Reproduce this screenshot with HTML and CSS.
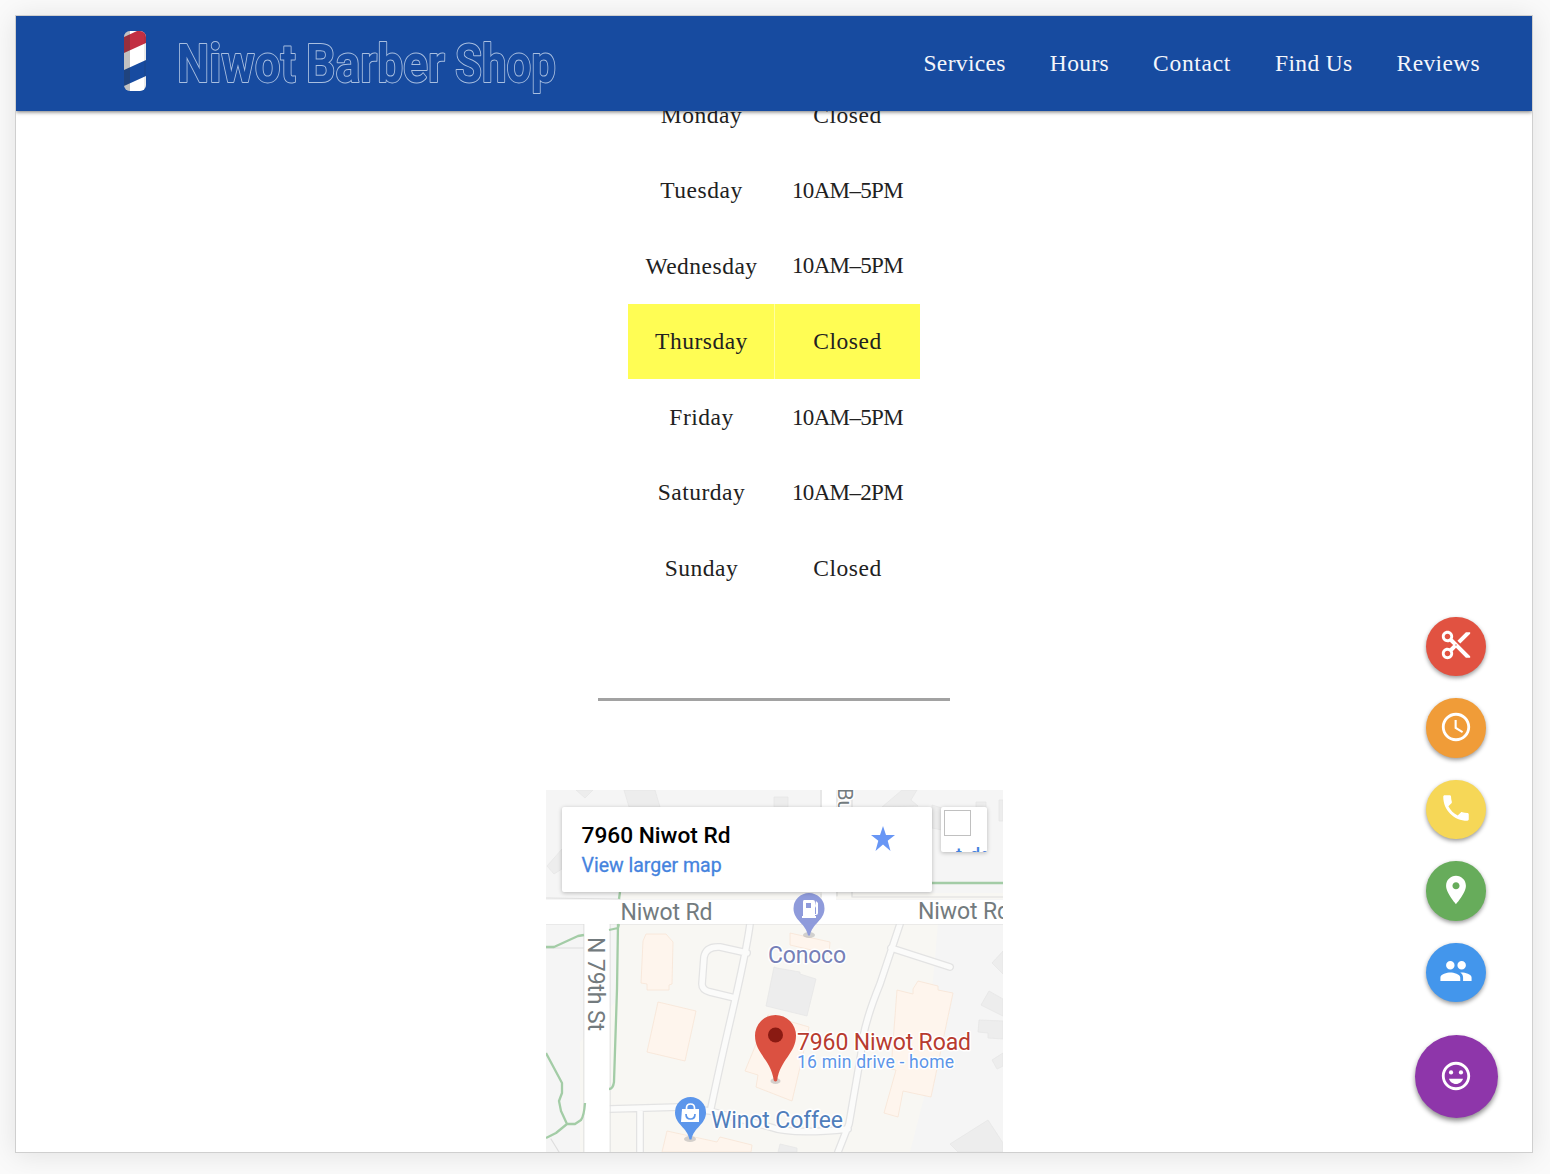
FILE: index.html
```html
<!DOCTYPE html>
<html lang="en">
<head>
<meta charset="utf-8">
<title>Niwot Barber Shop</title>
<link rel="stylesheet" href="styles.css">
</head>
<body>
<div class="window">
  <header class="navbar">
    <div class="brand">
      <svg class="pole" viewBox="0 0 22 60">
        <defs><clipPath id="pole"><rect width="22" height="60" rx="6"/></clipPath></defs>
        <g clip-path="url(#pole)">
          <path fill="#fff" d="M0 0h22v60H0z"/>
          <path fill="#c22f43" d="M0 6L13 0h9v12L0 22z"/>
          <path fill="#174ba0" d="M0 39l22-10v16L0 55z"/>
          <path fill="#333" opacity=".3" d="M0 0h6v60H0z"/>
          <path fill="#333" opacity=".1" d="M20 0h2v60h-2z"/>
        </g>
      </svg>
      <svg class="wordmark" viewBox="0 0 390 70">
        <text x="0" y="51" textLength="119" lengthAdjust="spacingAndGlyphs">Niwot</text>
        <text x="129" y="51" textLength="139" lengthAdjust="spacingAndGlyphs">Barber</text>
        <text x="278" y="51" textLength="101" lengthAdjust="spacingAndGlyphs">Shop</text>
      </svg>
    </div>
    <nav class="links"><a>Services</a><a>Hours</a><a class="wide">Contact</a><a>Find Us</a><a>Reviews</a></nav>
  </header>
  <main class="content">
    <table class="hours">
      <tr><td>Monday</td><td>Closed</td></tr>
      <tr><td>Tuesday</td><td class="time">10AM–5PM</td></tr>
      <tr><td>Wednesday</td><td class="time">10AM–5PM</td></tr>
      <tr class="today"><td>Thursday</td><td>Closed</td></tr>
      <tr><td>Friday</td><td class="time">10AM–5PM</td></tr>
      <tr><td>Saturday</td><td class="time">10AM–2PM</td></tr>
      <tr><td>Sunday</td><td>Closed</td></tr>
    </table>
    <hr class="divider">
    <section class="map">
      <svg class="tiles" viewBox="546 790 457 362">
        <path fill="#f5f5f5" d="M546 790h457v362H546z"/>
        <path fill="#f8f7f3" d="M618 924h320l-8 90 20 0-20 60-20 78H580v-110l35-40z"/>
        <path fill="#f8f7f3" d="M620 893h383v6H620z"/>
        <g fill="#ededed" stroke="#e5e5e5" stroke-width=".7">
          <path d="M576 790l9 8 8-8zM624 790h31l5 17h-31zM547 866l15-17v20l-8 5zM774 797h14v10h-14zM882 807l20-17h15l-6 10 7 6zM932 805l10 3v22l-10-2zM976 802h10v6h-10zM999 800h4v21h-4z"/>
          <path d="M774 967l3 1 23 4v2l16 5-9 37-41-10zM1003 951l-11 12 11 11zM989 991l14 8v17l-22-11zM979 1020l24 1v18l-15-1v-5l-10-1zM1003 1053l-11 7 5 9 6-3zM950 1144l38-24 15 23v9h-45zM780 1144l17 4v4h-19z"/>
        </g>
        <g fill="#fef5ed" stroke="#f8e5d5" stroke-width=".8">
          <path d="M646 934h20l7 8-1 42-3 1v5h-22v-6l-6-1 2-42zM658 1002l38 9-11 50-38-9zM790 933l40 9-1 12-39-9zM768 1015l41 12-8 36-9 38-36-14 2-12-13-4zM897 990l16 4v-5l5-8 20 5v4l15 3-22 104-28-6-5 26-14-4 12-43-5-1zM667 1131l50 11 3-5 32 8-1 7h-89z"/>
        </g>
        <g fill="none" stroke-linejoin="round" stroke-linecap="round">
          <path stroke="#e3e3e3" stroke-width="8" d="M750 924C744 970 729 1020 711 1108M747 953l-27-6q-14-1-16 10l-2 27q0 6 8 8l25 6M900 924l-20 60q-18 44-19 70l-12 70-11 28M891 948l59 19M610 1109l70-2 30 4 60 16q22 8 78 2M640 1109v43"/>
          <path stroke="#fbfbfa" stroke-width="5.500" d="M750 924C744 970 729 1020 711 1108M747 953l-27-6q-14-1-16 10l-2 27q0 6 8 8l25 6M900 924l-20 60q-18 44-19 70l-12 70-11 28M891 948l59 19M610 1109l70-2 30 4 60 16q22 8 78 2M640 1109v43"/>
          <path stroke="#dedede" stroke-width="1.200" d="M821 790v17M837 790v106M852 790v107M821 894v3M546 898l74 1M546 924h38M609 924h394M853 897h150M584 924v228M610 924v228M546 948h38M551 1139l8 13"/>
        </g>
        <g fill="none" stroke-linejoin="round">
          <path stroke="#fff" stroke-width="24" d="M546 912h457"/>
          <path stroke="#fff" stroke-width="25" d="M597 911v241"/>
          <path stroke="#fff" stroke-width="14" d="M829 790v110"/>
          <path stroke="#a3cca6" stroke-width="2.300" d="M620 892l-1 7M609 930l9-2 1-4M618 924l-1 65-3 93q-1 7-5 7M546 947h8l24-11 6-1M932 883h71M546 1053l16 30v10l-3 8 2 10 6 13-11 9-10 5M567 1124h8l6-4q3-4 4-17"/>
        </g>
        <g class="map-labels">
          <text x="620.500" y="920" textLength="92">Niwot Rd</text>
          <text x="918" y="919" textLength="92">Niwot Rd</text>
          <text transform="translate(588 937) rotate(90)" textLength="94">N 79th St</text>
          <text transform="translate(838 788) rotate(90)" class="side-street">Bu</text>
          <text x="768" y="963" fill="#7680b7" textLength="78">Conoco</text>
          <text x="711" y="1128" fill="#507ebb" textLength="132">Winot Coffee</text>
          <text x="797" y="1050" fill="#b83b2f" textLength="174">7960 Niwot Road</text>
          <text x="797" y="1068" class="drive" fill="#5c95e8" textLength="157">16 min drive - home</text>
        </g>
        <g fill="#aaa" opacity=".5"><ellipse cx="809" cy="935" rx="6" ry="3"/><ellipse cx="690" cy="1139" rx="6" ry="3"/><ellipse cx="775.500" cy="1081" rx="5" ry="3"/></g>
        <path fill="#8f9bdb" d="M809 893a15.500 15.500 0 0 0-15.500 15.500c0 12 12.500 15 14.500 27h2c2-12 14.500-15 14.500-27A15.500 15.500 0 0 0 809 893z"/>
        <path fill="#fff" fill-rule="evenodd" d="M804 900h9q2 0 2 2v14h1v2h-14v-2h1v-14q0-2 1-2zm2 3v5h5v-5zM816 901l2 2v10q0 2-2 2h-1v-1h1v-6l-1-2z"/>
        <path fill="#5c96eb" d="M690.500 1097a15.500 15.500 0 0 0-15.500 15.500c0 12 12.500 15 14.500 27h2c2-12 14.500-15 14.500-27a15.500 15.500 0 0 0-15.500-15.500z"/>
        <path fill="#fff" d="M682 1109h17v13h-18z"/>
        <path fill="none" stroke="#fff" stroke-width="1.700" d="M686.500 1110v-2q0-4 4-4t4 4v2"/>
        <path fill="none" stroke="#5c96eb" stroke-width="1.700" d="M686 1114q0 5 4.500 5t4.500-5"/>
        <path fill="#db5141" d="M775.500 1015a20.500 20.500 0 0 0-20.500 20.500c0 18 16 24 18.800 45q1.700 2 3.400 0c2.800-21 18.800-27 18.800-45a20.500 20.500 0 0 0-20.500-20.500z"/>
        <circle cx="775.500" cy="1035" r="7.500" fill="#8a1a12"/>
      </svg>
      <div class="place-card">
        <div class="place"><strong>7960 Niwot Rd</strong><a>View larger map</a></div>
        <svg class="star" viewBox="0 0 24 25"><path fill="#6896f5" d="M12 0l3 9h9l-7.300 5.700L19.500 25 12 18.500 4.500 25l2.800-10.300L0 9h9z"/></svg>
      </div>
      <div class="thumb"><span class="thumb-box"></span><svg class="thumb-label" viewBox="0 0 46 8"><text x="15" y="17">t</text><text x="29" y="17">def</text></svg></div>
    </section>
  </main>
  <div class="fabs">
    <a class="fab red"><svg viewBox="0 0 24 24"><path d="M9.640 7.640c.23-.5.360-1.050.36-1.640 0-2.210-1.790-4-4-4S2 3.790 2 6s1.790 4 4 4c.59 0 1.140-.13 1.640-.36L10 12l-2.360 2.360C7.140 14.130 6.590 14 6 14c-2.210 0-4 1.790-4 4s1.790 4 4 4 4-1.790 4-4c0-.59-.13-1.140-.36-1.640L12 14l7 7h3v-1L9.640 7.640zM6 8c-1.100 0-2-.89-2-2s.9-2 2-2 2 .89 2 2-.9 2-2 2zm0 12c-1.100 0-2-.89-2-2s.9-2 2-2 2 .89 2 2-.9 2-2 2zm6-7.500c-.28 0-.5-.22-.5-.5s.22-.5.5-.5.5.22.5.5-.22.5-.5.5zM19 3l-6 6 2 2 7-7V3z"/></svg></a>
    <a class="fab orange"><svg viewBox="0 0 24 24"><path d="M11.990 2C6.470 2 2 6.480 2 12s4.470 10 9.990 10C17.520 22 22 17.520 22 12S17.520 2 11.990 2zM12 20c-4.420 0-8-3.580-8-8s3.580-8 8-8 8 3.580 8 8-3.580 8-8 8zm.5-13H11v6l5.250 3.150.75-1.230-4.500-2.670z"/></svg></a>
    <a class="fab yellow"><svg viewBox="0 0 24 24"><path d="M6.620 10.790c1.440 2.830 3.760 5.140 6.590 6.590l2.200-2.200c.27-.27.670-.36 1.020-.24 1.120.37 2.330.57 3.570.57.550 0 1 .45 1 1V20c0 .55-.45 1-1 1-9.390 0-17-7.610-17-17 0-.55.450-1 1-1h3.500c.55 0 1 .45 1 1 0 1.250.2 2.450.57 3.570.11.35.030.74-.25 1.020l-2.200 2.200z"/></svg></a>
    <a class="fab green"><svg viewBox="0 0 24 24"><path d="M12 2C8.130 2 5 5.130 5 9c0 5.250 7 13 7 13s7-7.750 7-13c0-3.870-3.130-7-7-7zm0 9.500c-1.380 0-2.500-1.120-2.500-2.500s1.120-2.500 2.500-2.500 2.500 1.120 2.500 2.500-1.120 2.500-2.500 2.500z"/></svg></a>
    <a class="fab blue"><svg viewBox="0 0 24 24"><path d="M16 11c1.660 0 2.990-1.340 2.990-3S17.660 5 16 5c-1.660 0-3 1.340-3 3s1.340 3 3 3zm-8 0c1.660 0 2.990-1.340 2.990-3S9.660 5 8 5C6.340 5 5 6.340 5 8s1.340 3 3 3zm0 2c-2.330 0-7 1.170-7 3.500V19h14v-2.500c0-2.330-4.670-3.500-7-3.500zm8 0c-.29 0-.62.020-.97.050 1.160.84 1.970 1.970 1.970 3.450V19h6v-2.500c0-2.330-4.670-3.500-7-3.500z"/></svg></a>
    <a class="fab purple"><svg viewBox="0 0 24 24"><path d="M11.990 2C6.470 2 2 6.480 2 12s4.470 10 9.990 10S22 17.520 22 12 17.520 2 11.990 2zM12 20c-4.420 0-8-3.580-8-8s3.580-8 8-8 8 3.580 8 8-3.580 8-8 8zM7 14c.7 2 2.600 3.700 5 3.700s4.300-1.700 5-3.700z"/><circle cx="8.500" cy="9.500" r="1.500"/><circle cx="15.500" cy="9.500" r="1.500"/></svg></a>
  </div>
</div>
</body>
</html>
```
FILE: styles.css
```css
* { box-sizing: border-box; }
body {
  margin: 0;
  height: 1174px;
  padding: 15px 17px 21px 15px;
  background: #fafafa;
  overflow: hidden;
  font-family: "Liberation Serif", serif;
}
.window {
  position: relative;
  height: 1138px;
  border: 1px solid #cfcfcf;
  background: #fff;
  overflow: hidden;
  box-shadow: 0 2px 26px rgba(0, 0, 0, .1);
}
.navbar {
  position: relative;
  z-index: 1;
  display: flex;
  justify-content: space-between;
  height: 94.500px;
  padding: 0 52px 0 108px;
  background: #174ba0;
  box-shadow: 0 1px 4px rgba(0, 0, 0, .55);
}
.brand { display: flex; align-items: flex-start; gap: 31px; padding-top: 14.500px; }
.pole { width: 22px; height: 60px; }
.wordmark { width: 390px; height: 70px; }
.wordmark text {
  font: 700 53.500px Roboto, sans-serif;
  fill: #174ba0;
  stroke: #a9bfe0;
  stroke-width: 2px;
  stroke-linejoin: round;
  paint-order: stroke;
}
.links {
  display: flex;
  gap: 44px;
  font-size: 23.500px;
  line-height: 94px;
  color: #f4f6fb;
  letter-spacing: .35px;
}
.links .wide { letter-spacing: .7px; }
.hours {
  width: 292px;
  margin: -33px auto 0;
  border-collapse: collapse;
  table-layout: fixed;
  font-size: 23.500px;
  color: #212121;
  letter-spacing: .5px;
}
.hours td { height: 75.500px; padding: 0; text-align: center; }
.hours td:first-child { width: 147px; }
.hours .time { font-size: 23px; letter-spacing: -.65px; }
.today td { background: #fffd54; background-clip: padding-box; border-bottom: 1px solid #fff; }
.today td:first-child { background: linear-gradient(90deg, #fffd54 146px, #fffea0 146px); }
.divider {
  width: 352px;
  height: 3px;
  margin: 92px auto 89px;
  border: 0;
  background: #a2a2a2;
}
.map {
  position: relative;
  width: 457px;
  height: 362px;
  margin: 0 auto;
  overflow: hidden;
  font-family: Roboto, sans-serif;
}
.tiles { display: block; width: 457px; height: 362px; }
.map-labels {
  font-size: 23px;
  fill: #737b7e;
  stroke: #fff;
  stroke-width: 3px;
  stroke-linejoin: round;
  paint-order: stroke;
}
.side-street { font-size: 20px; }
.drive { font-size: 17.500px; }
.place-card, .thumb {
  position: absolute;
  top: 17px;
  background: #fff;
  border-radius: 2px;
  box-shadow: 0 1px 4px rgba(0, 0, 0, .25);
}
.place-card {
  left: 16px;
  display: flex;
  justify-content: space-between;
  width: 370px;
  height: 85px;
  padding: 14px 37px 0 20px;
}
.place { display: flex; flex-direction: column; gap: 1px; }
.place strong { font-size: 22.700px; font-weight: 500; line-height: 29px; color: #000; }
.place a { font-size: 19.500px; line-height: 29px; color: #4583de; -webkit-text-stroke: .3px #4583de; }
.star { width: 24px; height: 25px; margin-top: 5px; }
.thumb { left: 395px; width: 46px; height: 45px; padding: 3px; overflow: hidden; }
.thumb-box { display: block; width: 27px; height: 26px; border: 1.500px solid #c0c0c0; }
.thumb-label { display: block; width: 46px; height: 8px; margin: 8px 0 0 -3px; }
.thumb-label text { font-size: 18px; font-weight: 500; fill: #4583de; }
.fabs {
  position: absolute;
  top: 600.500px;
  right: 34.500px;
  display: flex;
  flex-direction: column;
  align-items: center;
  gap: 22px;
}
.fab {
  display: flex;
  align-items: center;
  justify-content: center;
  width: 59.500px;
  height: 59.500px;
  border-radius: 50%;
  box-shadow: 0 2px 4px rgba(0, 0, 0, .4);
}
.fab svg { width: 34px; height: 34px; fill: #fff; margin: -2px 0 0 -1px; }
.red { background: #e15241; }
.orange { background: #f09c38; }
.yellow { background: #f6d757; }
.green { background: #67ac5b; }
.blue { background: #4396ec; }
.purple { width: 83px; height: 83px; margin-top: 11px; background: #8e36aa; box-shadow: 0 3px 5px rgba(0, 0, 0, .45); }
```
